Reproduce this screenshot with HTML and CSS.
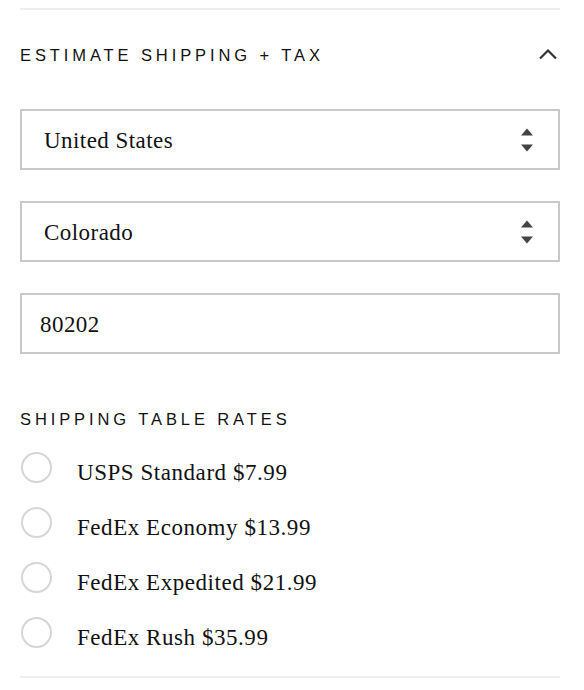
FILE: index.html
```html
<!DOCTYPE html>
<html lang="en">
<head>
<meta charset="utf-8">
<title>Estimate Shipping + Tax</title>
<link rel="stylesheet" href="styles.css">
</head>
<body>
<div class="panel">
  <div class="rule"></div>
  <div class="head">
    <h2 class="caps">ESTIMATE SHIPPING + TAX</h2>
    <svg class="chev" width="20" height="12" viewBox="0 0 20 12"><polyline points="2,10.5 10,2.5 18,10.5" fill="none" stroke="#333" stroke-width="2.2"/></svg>
  </div>
  <div class="field select">
    <span class="val">United States</span>
    <svg class="arrows" width="14" height="28" viewBox="0 0 14 28"><polygon points="1,9.5 7,2.5 13,9.5" fill="#444"/><polygon points="1,18.5 7,25.5 13,18.5" fill="#444"/></svg>
  </div>
  <div class="field select">
    <span class="val">Colorado</span>
    <svg class="arrows" width="14" height="28" viewBox="0 0 14 28"><polygon points="1,9.5 7,2.5 13,9.5" fill="#444"/><polygon points="1,18.5 7,25.5 13,18.5" fill="#444"/></svg>
  </div>
  <div class="field input">
    <span class="val">80202</span>
  </div>
  <h3 class="caps sub">SHIPPING TABLE RATES</h3>
  <ul class="rates">
    <li class="rate"><span class="radio"></span><span class="label">USPS Standard $7.99</span></li>
    <li class="rate"><span class="radio"></span><span class="label">FedEx Economy $13.99</span></li>
    <li class="rate"><span class="radio"></span><span class="label">FedEx Expedited $21.99</span></li>
    <li class="rate"><span class="radio"></span><span class="label">FedEx Rush $35.99</span></li>
  </ul>
  <div class="rule bottom"></div>
</div>
</body>
</html>
```
FILE: styles.css
```css
html, body {
  margin: 0;
  padding: 0;
  background: #fff;
}
.panel {
  padding: 8px 24px 0 20px;
  font-family: "Liberation Serif", "Times New Roman", serif;
  color: #111;
}
.rule {
  height: 2px;
  background: #eeeeee;
}
.head {
  display: flex;
  align-items: center;
  justify-content: space-between;
  margin-top: 33px;
  height: 24px;
}
.caps {
  margin: 0;
  font-family: "Liberation Sans", Arial, sans-serif;
  font-weight: normal;
  font-size: 16.5px;
  line-height: 24px;
  letter-spacing: 3.9px;
  color: #111;
}
.chev {
  margin-right: 2px;
  margin-top: -3px;
}
.field {
  box-sizing: border-box;
  height: 61px;
  border: 2px solid #c9c9c9;
  display: flex;
  align-items: center;
  justify-content: space-between;
  font-size: 23px;
  letter-spacing: 0.45px;
  margin-top: 31px;
}
.head + .field {
  margin-top: 42px;
}
.select {
  padding: 2px 24px 0 22px;
}
.input {
  padding: 2px 24px 0 18px;
}
.arrows {
  margin-top: -2px;
}
.sub {
  margin-top: 53px;
}
.rates {
  list-style: none;
  margin: 21px 0 0 0;
  padding: 0;
  display: flex;
  flex-direction: column;
  gap: 25px;
}
.rate {
  display: flex;
  align-items: flex-start;
  height: 30px;
}
.radio {
  box-sizing: border-box;
  width: 31px;
  height: 31px;
  border: 2px solid #d6d6d6;
  border-radius: 50%;
  margin-left: 1px;
  flex: none;
}
.label {
  font-size: 23px;
  line-height: 30px;
  letter-spacing: 0.55px;
  margin-left: 25px;
  margin-top: 6px;
}
.bottom {
  margin-top: 29px;
}
```
